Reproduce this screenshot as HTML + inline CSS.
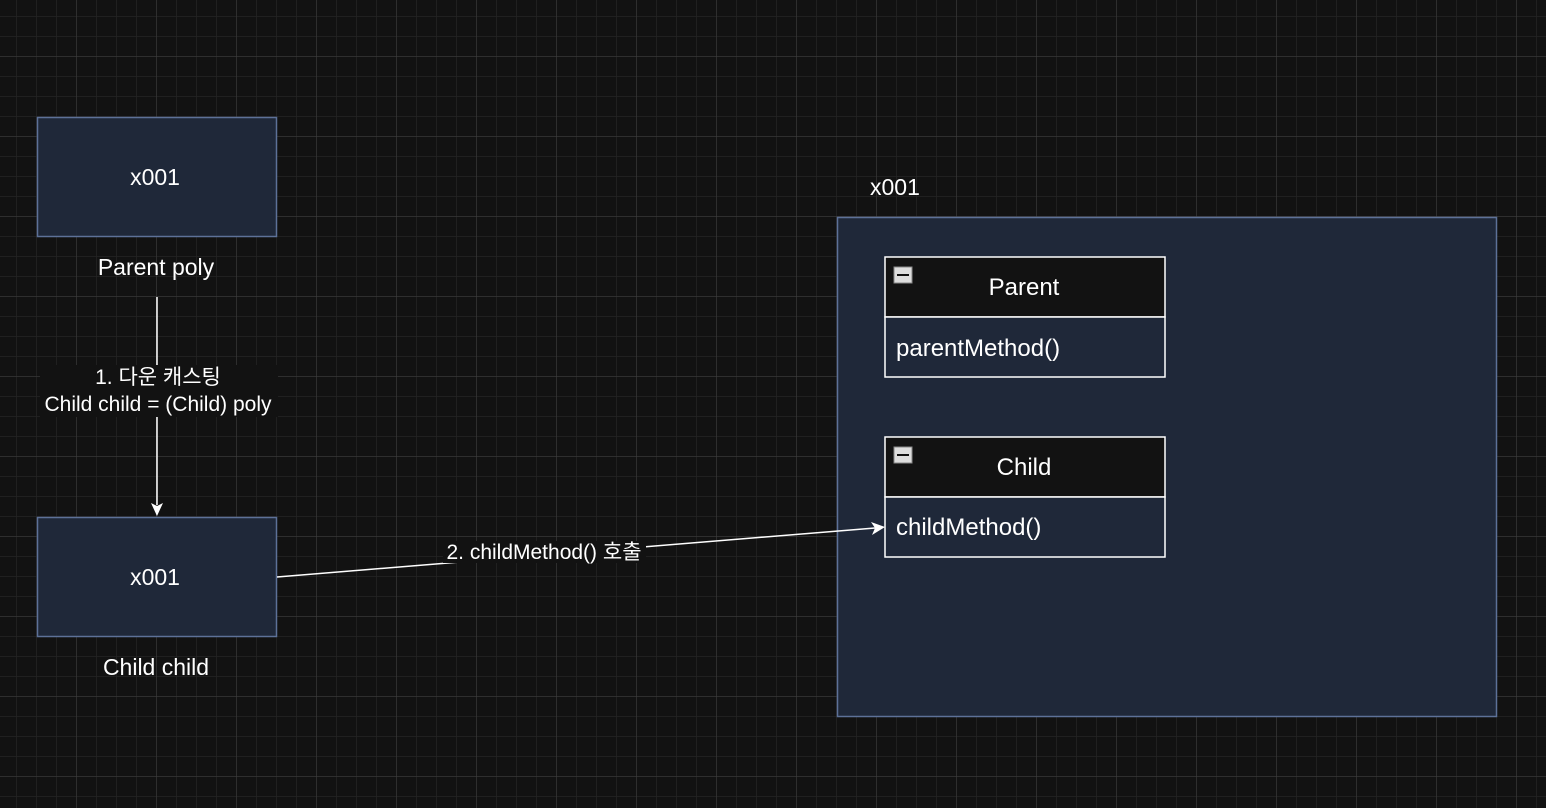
<!DOCTYPE html>
<html><head><meta charset="utf-8"><style>
body{margin:0;width:1546px;height:808px;overflow:hidden;background:#121212;font-family:"Liberation Sans","Noto Sans CJK KR",sans-serif;}
svg{position:absolute;left:0;top:0}
text{font-family:"Liberation Sans","Noto Sans CJK KR",sans-serif;fill:#fff}
</style></head><body>
<svg width="1546" height="808">
<defs>
<pattern id="minor" x="16" y="16" width="20" height="20" patternUnits="userSpaceOnUse"><path d="M0 0H20M0 0V20" stroke="#242424" stroke-width="1.5" fill="none"/></pattern>
<pattern id="major" x="76" y="56" width="80" height="80" patternUnits="userSpaceOnUse"><path d="M0 0H80M0 0V80" stroke="#404040" stroke-width="1" fill="none"/></pattern>
</defs>
<rect width="1546" height="808" fill="url(#minor)"/>
<rect width="1546" height="808" fill="url(#major)"/>

<rect x="37.5" y="117.5" width="239" height="119" fill="#1f2839" stroke="#5d7198" stroke-width="1.5"/>
<text x="155" y="185" font-size="23" text-anchor="middle">x001</text>
<text x="156" y="275" font-size="23" text-anchor="middle">Parent poly</text>

<line x1="157" y1="297" x2="157" y2="505" stroke="#fff" stroke-width="1.5"/>
<path d="M151 503 L157 516 L163 503 L157 506Z" fill="#fff"/>
<rect x="40" y="365" width="238" height="52" fill="#121212"/>
<text x="158" y="384" font-size="21" text-anchor="middle">1. 다운 캐스팅</text>
<text x="158" y="411" font-size="21" text-anchor="middle">Child child = (Child) poly</text>

<rect x="37.5" y="517.5" width="239" height="119" fill="#1f2839" stroke="#5d7198" stroke-width="1.5"/>
<text x="155" y="585" font-size="23" text-anchor="middle">x001</text>
<text x="156" y="675" font-size="23" text-anchor="middle">Child child</text>

<text x="870" y="195" font-size="23">x001</text>
<rect x="837.5" y="217.5" width="659" height="499" fill="#1f2839" stroke="#5d7198" stroke-width="1.5"/>

<rect x="885" y="257" width="280" height="60" fill="#121212" stroke="#fff" stroke-width="1.5"/>
<rect x="885" y="317" width="280" height="60" fill="#1f2839" stroke="#fff" stroke-width="1.5"/>
<rect x="894" y="267" width="18" height="16" fill="#ddd" stroke="#888"/>
<rect x="897" y="274" width="12" height="2" fill="#111"/>
<text x="1024" y="295" font-size="24" text-anchor="middle">Parent</text>
<text x="896" y="356" font-size="24">parentMethod()</text>

<rect x="885" y="437" width="280" height="60" fill="#121212" stroke="#fff" stroke-width="1.5"/>
<rect x="885" y="497" width="280" height="60" fill="#1f2839" stroke="#fff" stroke-width="1.5"/>
<rect x="894" y="447" width="18" height="16" fill="#ddd" stroke="#888"/>
<rect x="897" y="454" width="12" height="2" fill="#111"/>
<text x="1024" y="475" font-size="24" text-anchor="middle">Child</text>
<text x="896" y="535" font-size="24">childMethod()</text>

<line x1="277" y1="577" x2="875" y2="528" stroke="#fff" stroke-width="1.5"/>
<path d="M871 522 L885 527 L872 535 L875 528Z" fill="#fff"/>
<rect x="443" y="541" width="203" height="22" fill="#121212"/>
<text x="544" y="559" font-size="21" text-anchor="middle">2. childMethod() 호출</text>
</svg>
</body></html>
